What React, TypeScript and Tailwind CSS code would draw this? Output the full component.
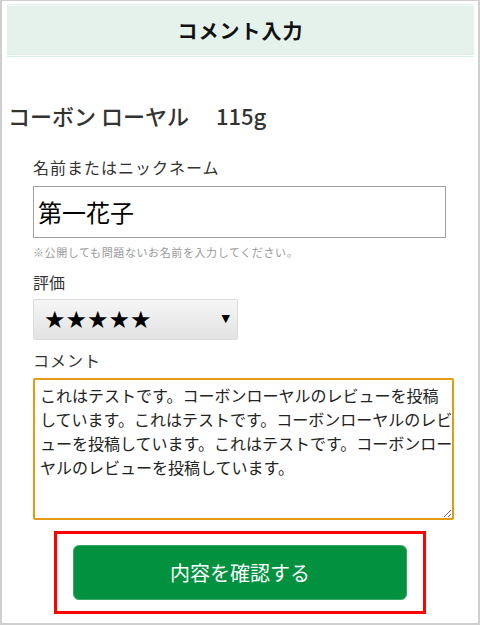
import React from "react";

const jp = { fontFamily: '"Noto Sans CJK JP", "Noto Sans", sans-serif' } as const;

const comment =
  "これはテストです。コーボンローヤルのレビューを投稿\nしています。これはテストです。コーボンローヤルのレビ\nューを投稿しています。これはテストです。コーボンロー\nヤルのレビューを投稿しています。";

export default function App() {
  return (
    <div
      className="w-[480px] h-[625px] bg-white border-l-2 border-r-2 border-t border-b-2 border-[#cfcfcf] overflow-hidden"
      style={jp}
    >
      <div className="mt-[3px] ml-[5px] mr-[4px] border-y-[3px] border-double border-[#dcefe7] bg-[#e5f2ec] bg-clip-padding h-[53px] flex items-center justify-center">
        <h1 className="text-[20px] font-bold text-[#111] tracking-[1px]">コメント入力</h1>
      </div>

      <h2 className="mt-[43px] pl-[6px] text-[22px] leading-[30px] font-medium text-[#333] whitespace-pre">
        コーボン ローヤル　 115g
      </h2>

      <div className="ml-[31px]">
        <div className="mt-[25px] text-[16px] leading-[24px] text-[#333] tracking-[1px]">名前またはニックネーム</div>
        <div className="mt-[7px] w-[413px] h-[52px] border border-[#a0a0a0] flex items-center pl-[4px] text-[24px] text-black">
          第一花子
        </div>
        <div className="mt-[6px] text-[11px] leading-[16px] text-[#999] tracking-[0.6px]">※公開しても問題ないお名前を入力してください。</div>
        <div className="mt-[10px] text-[16px] leading-[24px] text-[#333]">評価</div>
        <div className="mt-[5px] w-[205px] h-[41px] border border-[#dcdcdc] rounded-[2px] bg-gradient-to-b from-[#f6f6f6] to-[#e2e2e2] flex items-center justify-between pl-[10px] pr-[7px]">
          <span className="text-[24px] leading-none text-black" style={{ fontFamily: '"DejaVu Sans", sans-serif' }}>★★★★★</span>
          <span className="text-[11px] text-black" style={{ fontFamily: '"DejaVu Sans", sans-serif' }}>▼</span>
        </div>
        <div className="mt-[8px] text-[16px] leading-[24px] text-[#333] tracking-[1px]">コメント</div>
        <textarea
          className="mt-[6px] block w-[421px] h-[142px] border-2 border-[#e59a14] rounded-[2px] pt-[3px] pl-[5px] pr-0 text-[16px] leading-[24px] text-[#222] outline-none resize-y whitespace-pre overflow-hidden"
          style={jp}
          defaultValue={comment}
        />
      </div>

      <div className="mt-[11px] ml-[52px] w-[372px] h-[83px] border-[3px] border-[#ff0000] pt-[11px] pl-[16px]">
        <button className="w-[334px] h-[55px] rounded-[6px] bg-[#01913f] border border-[#3aa866] text-white text-[20px] flex items-center justify-center">
          内容を確認する
        </button>
      </div>
    </div>
  );
}
